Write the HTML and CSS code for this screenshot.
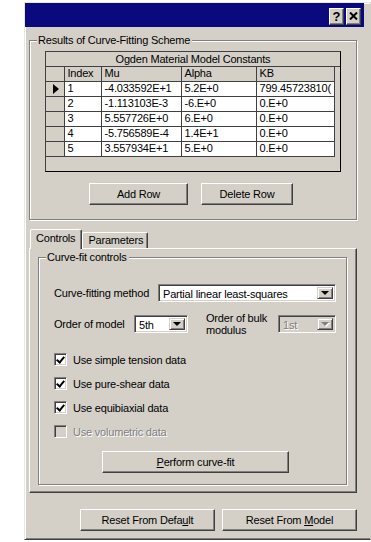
FILE: index.html
```html
<!DOCTYPE html>
<html lang="en">
<head>
  <meta charset="UTF-8" />
  <title>Curve Fitting</title>
  <link rel="stylesheet" href="styles.css">
</head>
<body>
  <div class="window">
    <div class="titlebar">
      <span class="cap-btn help">?</span>
      <span class="cap-btn close">
        <svg width="9" height="8" viewBox="0 0 9 8"><path d="M1 0.5 L8 7.5 M8 0.5 L1 7.5" stroke="#000" stroke-width="2"/></svg>
      </span>
    </div>

    <div class="content">
      <div class="group results">
        <span class="group-title">Results of Curve-Fitting Scheme</span>

        <div class="grid">
          <div class="grid-caption">Ogden Material Model Constants</div>
          <table class="grid-table">
            <tr class="head">
              <td class="sel"></td><td class="c-index">Index</td><td class="c-mu">Mu</td><td class="c-alpha">Alpha</td><td class="c-kb">KB</td>
            </tr>
            <tr>
              <td class="sel"><span class="arrow"></span></td><td>1</td><td>-4.033592E+1</td><td>5.2E+0</td><td>799.45723810(</td>
            </tr>
            <tr>
              <td class="sel"></td><td>2</td><td>-1.113103E-3</td><td>-6.E+0</td><td>0.E+0</td>
            </tr>
            <tr>
              <td class="sel"></td><td>3</td><td>5.557726E+0</td><td>6.E+0</td><td>0.E+0</td>
            </tr>
            <tr>
              <td class="sel"></td><td>4</td><td>-5.756589E-4</td><td>1.4E+1</td><td>0.E+0</td>
            </tr>
            <tr>
              <td class="sel"></td><td>5</td><td>3.557934E+1</td><td>5.E+0</td><td>0.E+0</td>
            </tr>
          </table>
        </div>

        <div class="row-buttons">
          <button class="btn add">Add Row</button>
          <button class="btn delete">Delete Row</button>
        </div>
      </div>

      <div class="tabs">
        <div class="tab active">Controls</div>
        <div class="tab">Parameters</div>
      </div>

      <div class="tab-panel">
        <div class="group controls">
          <span class="group-title">Curve-fit controls</span>

          <div class="field-row first">
            <span class="label method-label">Curve-fitting method</span>
            <div class="combo method">
              <span class="combo-text">Partial linear least-squares</span>
              <span class="combo-btn"><span class="tri"></span></span>
            </div>
          </div>

          <div class="field-row second">
            <span class="label order-label">Order of model</span>
            <div class="combo order">
              <span class="combo-text">5th</span>
              <span class="combo-btn"><span class="tri"></span></span>
            </div>
            <span class="label bulk-label">Order of bulk<br>modulus</span>
            <div class="combo bulk disabled">
              <span class="combo-text">1st</span>
              <span class="combo-btn"><span class="tri"></span></span>
            </div>
          </div>

          <div class="checks">
            <label class="check"><span class="box checked"></span>Use simple tension data</label>
            <label class="check"><span class="box checked"></span>Use pure-shear data</label>
            <label class="check"><span class="box checked"></span>Use equibiaxial data</label>
            <label class="check disabled"><span class="box"></span>Use volumetric data</label>
          </div>

          <button class="btn perform"><u>P</u>erform curve-fit</button>
        </div>
      </div>

      <div class="footer">
        <button class="btn reset">Reset From Defa<u>u</u>lt</button>
        <button class="btn reset">Reset From <u>M</u>odel</button>
      </div>
    </div>
  </div>
</body>
</html>
```

FILE: styles.css
```css
* {
  box-sizing: border-box;
}

body {
  margin: 0;
  background: #fff;
  font-family: "Liberation Sans", Arial, sans-serif;
  font-size: 11px;
  letter-spacing: -0.2px;
  color: #000;
}

.window {
  margin: 2px 0 0 24px;
  width: 347px;
  height: 538px;
  background: #d4d0c8;
  border: 1px solid;
  border-color: #e8e6e0 #d4d0c8 #404040 #e8e6e0;
  box-shadow: inset 1px 1px 0 #fff, inset 0 -1px 0 #808080;
}

.titlebar {
  height: 24px;
  margin-right: 6px;
  background: #0a0a7e;
  display: flex;
  justify-content: flex-end;
  align-items: center;
  gap: 2px;
  padding: 2px 3px 0 0;
}

.cap-btn {
  width: 15px;
  height: 17px;
  background: #d4d0c8;
  border: 1px solid;
  border-color: #fff #404040 #404040 #fff;
  box-shadow: inset -1px -1px 0 #808080;
  display: flex;
  justify-content: center;
  align-items: center;
  font-weight: bold;
  font-size: 13px;
  letter-spacing: 0;
}

.content {
  padding: 0 13px 0 4px;
}

/* group boxes */
.group {
  position: relative;
  border: 1px solid #808080;
  box-shadow: 1px 1px 0 #fff, inset 1px 1px 0 #fff;
}

.group-title {
  position: absolute;
  top: -7px;
  left: 7px;
  padding: 0 2px 0 1px;
  background: #d4d0c8;
  line-height: 13px;
}

.results {
  margin-top: 13px;
  height: 180px;
  padding: 10px 15px 0 15px;
}

/* grid */
.grid {
  height: 121px;
  background: #d4d0c8;
  border: 1px solid #000;
  border-top-color: #404040;
  border-left-color: #404040;
}

.grid-caption {
  height: 15px;
  line-height: 14px;
  text-align: center;
  border-bottom: 1px solid #404040;
}

.grid-table {
  border-collapse: collapse;
  table-layout: fixed;
  width: 288px;
}

.grid-table td {
  height: 15px;
  padding: 0 0 0 3px;
  border: 1px solid #404040;
  background: #fff;
  white-space: nowrap;
  overflow: hidden;
  line-height: 13px;
}

.grid-table tr:first-child td {
  border-top: none;
}

.grid-table td:first-child {
  border-left: none;
}

.grid-table .head td {
  height: 14px;
  background: #d4d0c8;
}

.grid-table td.sel {
  width: 18px;
  background: #d4d0c8;
  padding: 0;
  text-align: center;
}

.c-index { width: 37px; }
.c-mu { width: 80px; }
.c-alpha { width: 75px; }
.c-kb { width: 78px; }

.arrow {
  display: inline-block;
  width: 0;
  height: 0;
  border-top: 5px solid transparent;
  border-bottom: 5px solid transparent;
  border-left: 6px solid #000;
  vertical-align: middle;
  margin-left: 2px;
}

/* buttons */
.btn {
  height: 22px;
  padding: 0;
  background: #d4d0c8;
  font-family: inherit;
  font-size: 11px;
  letter-spacing: -0.2px;
  color: #000;
  border: 1px solid;
  border-color: #fff #404040 #404040 #fff;
  box-shadow: inset -1px -1px 0 #808080;
}

.row-buttons {
  display: flex;
  gap: 13px;
  margin-top: 11px;
  padding-left: 44px;
}

.add { width: 99px; }
.delete { width: 92px; }

/* tabs */
.tabs {
  display: flex;
  align-items: flex-end;
  margin-top: 9px;
  height: 19px;
  position: relative;
  z-index: 1;
}

.tab {
  height: 16px;
  padding: 0 4px 0 5px;
  line-height: 15px;
  border: 1px solid;
  border-bottom: none;
  border-color: #fff #404040 #404040 #fff;
  box-shadow: inset -1px 0 0 #808080;
  border-radius: 2px 2px 0 0;
}

.tab.active {
  height: 20px;
  line-height: 17px;
  margin-left: 1px;
  padding: 0 6px 0 5px;
  background: #d4d0c8;
  margin-bottom: -1px;
}

.tab-panel {
  height: 245px;
  border: 1px solid;
  border-color: #fff #404040 #404040 #fff;
  box-shadow: inset -1px -1px 0 #808080;
  padding: 8px 9px 0 8px;
}

.controls {
  height: 228px;
  padding: 0 0 0 15px;
}

.field-row {
  display: flex;
  align-items: center;
}

.field-row.first {
  margin-top: 26px;
}

.field-row.second {
  margin-top: 10px;
}

.method-label { width: 104px; }
.order-label { width: 80px; }
.bulk-label {
  width: 72px;
  margin-left: 18px;
  line-height: 12px;
}

/* combo boxes */
.combo {
  height: 18px;
  display: flex;
  align-items: stretch;
  background: #fff;
  border: 1px solid;
  border-color: #808080 #fff #fff #808080;
  box-shadow: inset 1px 1px 0 #404040, inset -1px -1px 0 #d4d0c8;
  padding: 2px;
}

.method { width: 178px; }
.order { width: 54px; }
.bulk { width: 58px; }

.combo-text {
  flex: 1;
  line-height: 14px;
  padding-left: 2px;
}

.combo-btn {
  width: 16px;
  background: #d4d0c8;
  border: 1px solid;
  border-color: #d4d0c8 #404040 #404040 #d4d0c8;
  box-shadow: inset 1px 1px 0 #fff, inset -1px -1px 0 #808080;
  display: flex;
  justify-content: center;
  align-items: center;
}

.tri {
  width: 0;
  height: 0;
  border-left: 4px solid transparent;
  border-right: 4px solid transparent;
  border-top: 4px solid #000;
}

.combo.disabled {
  background: #d4d0c8;
  color: #808080;
}

.combo.disabled .combo-text {
  text-shadow: 1px 1px 0 #fff;
}

.combo.disabled .tri {
  border-top-color: #808080;
  filter: drop-shadow(1px 1px 0 #fff);
}

/* checkboxes */
.checks {
  margin-top: 17px;
  display: flex;
  flex-direction: column;
  gap: 11px;
}

.check {
  display: flex;
  align-items: center;
  height: 13px;
}

.box {
  width: 13px;
  height: 13px;
  margin-right: 6px;
  background: #fff;
  border: 1px solid;
  border-color: #808080 #fff #fff #808080;
  box-shadow: inset 1px 1px 0 #404040, inset -1px -1px 0 #d4d0c8;
  position: relative;
}

.box.checked::after {
  content: "";
  position: absolute;
  left: 3px;
  top: 1px;
  width: 3px;
  height: 6px;
  border: solid #000;
  border-width: 0 2px 2px 0;
  transform: rotate(40deg);
}

.check.disabled {
  color: #808080;
  text-shadow: 1px 1px 0 #fff;
}

.check.disabled .box {
  background: #d4d0c8;
}

.perform {
  display: block;
  width: 187px;
  margin: 13px 0 0 48px;
}

/* footer */
.footer {
  display: flex;
  justify-content: flex-end;
  gap: 7px;
  margin-top: 16px;
}

.reset {
  width: 135px;
}
```
